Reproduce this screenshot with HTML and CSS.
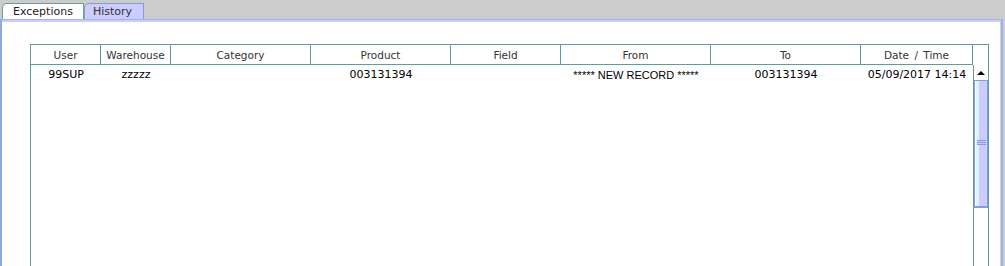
FILE: index.html
```html
<!DOCTYPE html>
<html lang="en">
<head>
    <meta charset="UTF-8">
    <title>History</title>
    <link rel="stylesheet" href="styles.css">
</head>
<body>
    <div class="tabs">
        <div class="tab">Exceptions</div>
        <div class="tab active">History</div>
    </div>

    <div class="panel">
        <div class="scroll-pane">
            <div class="header-line">
                <div class="grid header">
                    <div class="cell">User</div>
                    <div class="cell">Warehouse</div>
                    <div class="cell">Category</div>
                    <div class="cell">Product</div>
                    <div class="cell">Field</div>
                    <div class="cell">From</div>
                    <div class="cell">To</div>
                    <div class="cell">Date / Time</div>
                </div>
                <div class="corner"></div>
            </div>

            <div class="body">
                <div class="rows">
                    <div class="grid row">
                        <div class="cell">99SUP</div>
                        <div class="cell">zzzzz</div>
                        <div class="cell"></div>
                        <div class="cell">003131394</div>
                        <div class="cell"></div>
                        <div class="cell alt">***** NEW RECORD *****</div>
                        <div class="cell">003131394</div>
                        <div class="cell">05/09/2017 14:14</div>
                    </div>
                </div>

                <div class="vscroll">
                    <div class="arrow-up"></div>
                    <div class="thumb">
                        <div class="grip"></div>
                    </div>
                    <div class="track"></div>
                </div>
            </div>
        </div>
    </div>
</body>
</html>
```

FILE: styles.css
```css
* {
    margin: 0;
    padding: 0;
    box-sizing: border-box;
}

body {
    background: #cccccc;
    font-family: 'DejaVu Sans', sans-serif;
    font-size: 10.5px;
    color: #111;
    height: 266px;
    overflow: hidden;
    display: flex;
    flex-direction: column;
}

/* tab strip */

.tabs {
    display: flex;
    align-items: flex-end;
    height: 19px;
    padding-left: 2px;
}

.tab {
    height: 16px;
    width: 82px;
    padding-left: 10px;
    background: #ffffff;
    border: 1px solid #6a9c9c;
    border-bottom: none;
    border-top-left-radius: 5px 5px;
    line-height: 15px;
    color: #222;
    font-size: 11px;
}

.tab.active {
    width: 60px;
    padding-left: 8px;
    background: #ccccff;
    border-color: #7f9fdc;
    color: #333;
}

/* content panel */

.panel {
    flex: 1;
    background: #ffffff;
    border-top: 1px solid #9db6e6;
    border-left: 2px solid #8eaae6;
    border-right: 2px solid #9db6e6;
    margin-right: 2px;
    box-shadow: inset 0 2px 0 #ccccff, inset -1px 0 0 #ccccff;
    padding: 24px 0 0 28px;
}

.scroll-pane {
    width: 959px;
    height: 100%;
    border: 1px solid #5f9c9c;
    border-bottom: none;
    display: flex;
    flex-direction: column;
}

.header-line {
    display: flex;
}

.grid {
    display: grid;
    grid-template-columns: 70px 70px 140px 140px 110px 150px 150px 112px;
    width: 942px;
}

.header .cell {
    height: 20px;
    border-right: 1px solid #5f9c9c;
    border-bottom: 1px solid #5f9c9c;
    text-align: center;
    line-height: 20px;
    color: #333;
    word-spacing: 2px;
}

.corner {
    width: 15px;
}

.body {
    flex: 1;
    display: flex;
}

.rows {
    width: 942px;
}

.row .cell {
    height: 20px;
    line-height: 20px;
    text-align: center;
    font-size: 11px;
    color: #000;
}

.row .cell.alt {
    font-family: 'Liberation Sans', sans-serif;
}

/* vertical scrollbar */

.vscroll {
    width: 15px;
    border-left: 1px solid #5f9c9c;
    display: flex;
    flex-direction: column;
}

.arrow-up {
    height: 16px;
    display: flex;
    justify-content: center;
    align-items: center;
    border-bottom: 1px solid #7f9fdc;
}

.arrow-up::before {
    content: '';
    border-left: 4px solid transparent;
    border-right: 4px solid transparent;
    border-bottom: 4px solid #000;
}

.thumb {
    height: 126px;
    border: 1px solid #7f9fdc;
    border-top: none;
    background: linear-gradient(90deg, #ffffff 0, #ffffff 1px, #ddf4ff 1px, #ddf4ff 4px, #ccccff 4px);
    display: flex;
    align-items: center;
    justify-content: center;
    padding-bottom: 2px;
}

.grip {
    width: 9px;
    height: 5px;
    border-top: 1px solid #7f9fdc;
    border-bottom: 1px solid #7f9fdc;
    background: linear-gradient(#ccccff 1px, #7f9fdc 1px, #7f9fdc 2px, #ccccff 2px);
    background-size: 100% 3px;
}

.track {
    flex: 1;
    border-top: 1px solid #7f9fdc;
}
```
